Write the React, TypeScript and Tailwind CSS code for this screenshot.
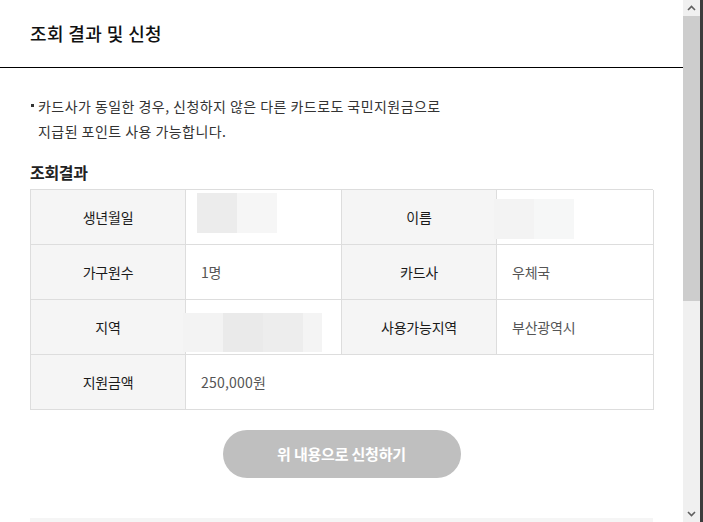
import React from "react";

const font = { fontFamily: '"Noto Sans CJK KR", "Noto Sans", sans-serif' };

function Blur({ colors, className }: { colors: string[]; className: string }) {
  return (
    <div className={"flex " + className}>
      {colors.map((c, i) => (
        <div key={i} className="h-full w-[40px]" style={{ background: c }} />
      ))}
    </div>
  );
}

export default function App() {
  return (
    <div className="flex h-[522px] w-[703px] overflow-hidden bg-white" style={font}>
      <div className="flex w-[683px] flex-col">
        <div className="flex h-[68px] shrink-0 items-center border-b border-black pl-[30px]">
          <h1 className="text-[18px] font-medium tracking-[0.4px] text-[#111]">조회 결과 및 신청</h1>
        </div>
        <div className="px-[30px] pt-[26px]">
          <div className="relative pl-[8px] text-[14px] leading-[25px] tracking-[0.45px] text-[#333]">
            <span className="absolute left-[1px] top-[10px] h-[3px] w-[3px] bg-[#333]" />
            카드사가 동일한 경우, 신청하지 않은 다른 카드로도 국민지원금으로
            <br />
            지급된 포인트 사용 가능합니다.
          </div>
          <h2 className="mt-[16px] text-[16px] font-bold leading-[24px] tracking-[-0.3px] text-[#222]">조회결과</h2>
          <div className="mt-[5px] grid grid-cols-[155px_156px_155px_157px] border-l border-t border-[#dddddd] text-[14px] tracking-[-0.2px]">
            <div className="flex h-[55px] items-center justify-center border-b border-r border-[#dddddd] bg-[#f5f5f5] text-[#1a1a1a]">생년월일</div>
            <div className="flex h-[55px] items-start border-b border-r border-[#dddddd] pl-[11px] pt-[3px]">
              <Blur colors={["#ececec", "#f6f6f6"]} className="h-[40px]" />
            </div>
            <div className="flex h-[55px] items-center justify-center border-b border-r border-[#dddddd] bg-[#f5f5f5] text-[#1a1a1a]">이름</div>
            <div className="flex h-[55px] items-start border-b border-r border-[#dddddd] pl-0 pt-[9px]">
              <Blur colors={["#f3f3f3", "#f6f7f7"]} className="-ml-[3px] h-[40px]" />
            </div>

            <div className="flex h-[55px] items-center justify-center border-b border-r border-[#dddddd] bg-[#f5f5f5] text-[#1a1a1a]">가구원수</div>
            <div className="flex h-[55px] items-center border-b border-r border-[#dddddd] pl-[15px] text-[#555]">1명</div>
            <div className="flex h-[55px] items-center justify-center border-b border-r border-[#dddddd] bg-[#f5f5f5] text-[#1a1a1a]">카드사</div>
            <div className="flex h-[55px] items-center border-b border-r border-[#dddddd] pl-[15px] text-[#555]">우체국</div>

            <div className="relative flex h-[55px] items-center justify-center border-b border-r border-[#dddddd] bg-[#f5f5f5] text-[#1a1a1a]">지역</div>
            <div className="relative h-[55px] border-b border-r border-[#dddddd]">
              <div className="absolute -left-[3px] top-[13px] flex h-[39px]">
                <div className="h-full w-[40px] bg-[#f3f3f3]" />
                <div className="h-full w-[40px] bg-[#eaeaea]" />
                <div className="h-full w-[40px] bg-[#ededed]" />
                <div className="h-full w-[19px] bg-[#f4f4f4]" />
              </div>
            </div>
            <div className="flex h-[55px] items-center justify-center border-b border-r border-[#dddddd] bg-[#f5f5f5] text-[#1a1a1a]">사용가능지역</div>
            <div className="flex h-[55px] items-center border-b border-r border-[#dddddd] pl-[15px] text-[#555]">부산광역시</div>

            <div className="flex h-[55px] items-center justify-center border-b border-r border-[#dddddd] bg-[#f5f5f5] text-[#1a1a1a]">지원금액</div>
            <div className="col-span-3 flex h-[55px] items-center border-b border-r border-[#dddddd] pl-[15px] text-[#555]">
              <span className="tracking-[0.2px]">250,000원</span>
            </div>
          </div>
          <div className="mt-[20px] flex justify-center">
            <button className="h-[48px] w-[238px] rounded-full bg-[#bfbfbf] text-[15px] font-bold tracking-[-0.2px] text-white">
              위 내용으로 신청하기
            </button>
          </div>
          <div className="mt-[40px] h-[10px] bg-[#f5f5f5]" />
        </div>
      </div>
      <div className="flex w-[17px] flex-col bg-[#f0f0f0]">
        <div className="flex h-[16px] items-center justify-center">
          <svg width="9" height="6" viewBox="0 0 9 6"><path d="M1 5 L4.5 1.5 L8 5" stroke="#606060" strokeWidth="1.6" fill="none" /></svg>
        </div>
        <div className="h-[285px] bg-[#cdcdcd]" />
        <div className="flex-1" />
        <div className="flex h-[17px] items-center justify-center">
          <svg width="9" height="6" viewBox="0 0 9 6"><path d="M1 1 L4.5 4.5 L8 1" stroke="#606060" strokeWidth="1.6" fill="none" /></svg>
        </div>
      </div>
      <div className="w-[3px] bg-[#3c3c3c]" />
    </div>
  );
}
